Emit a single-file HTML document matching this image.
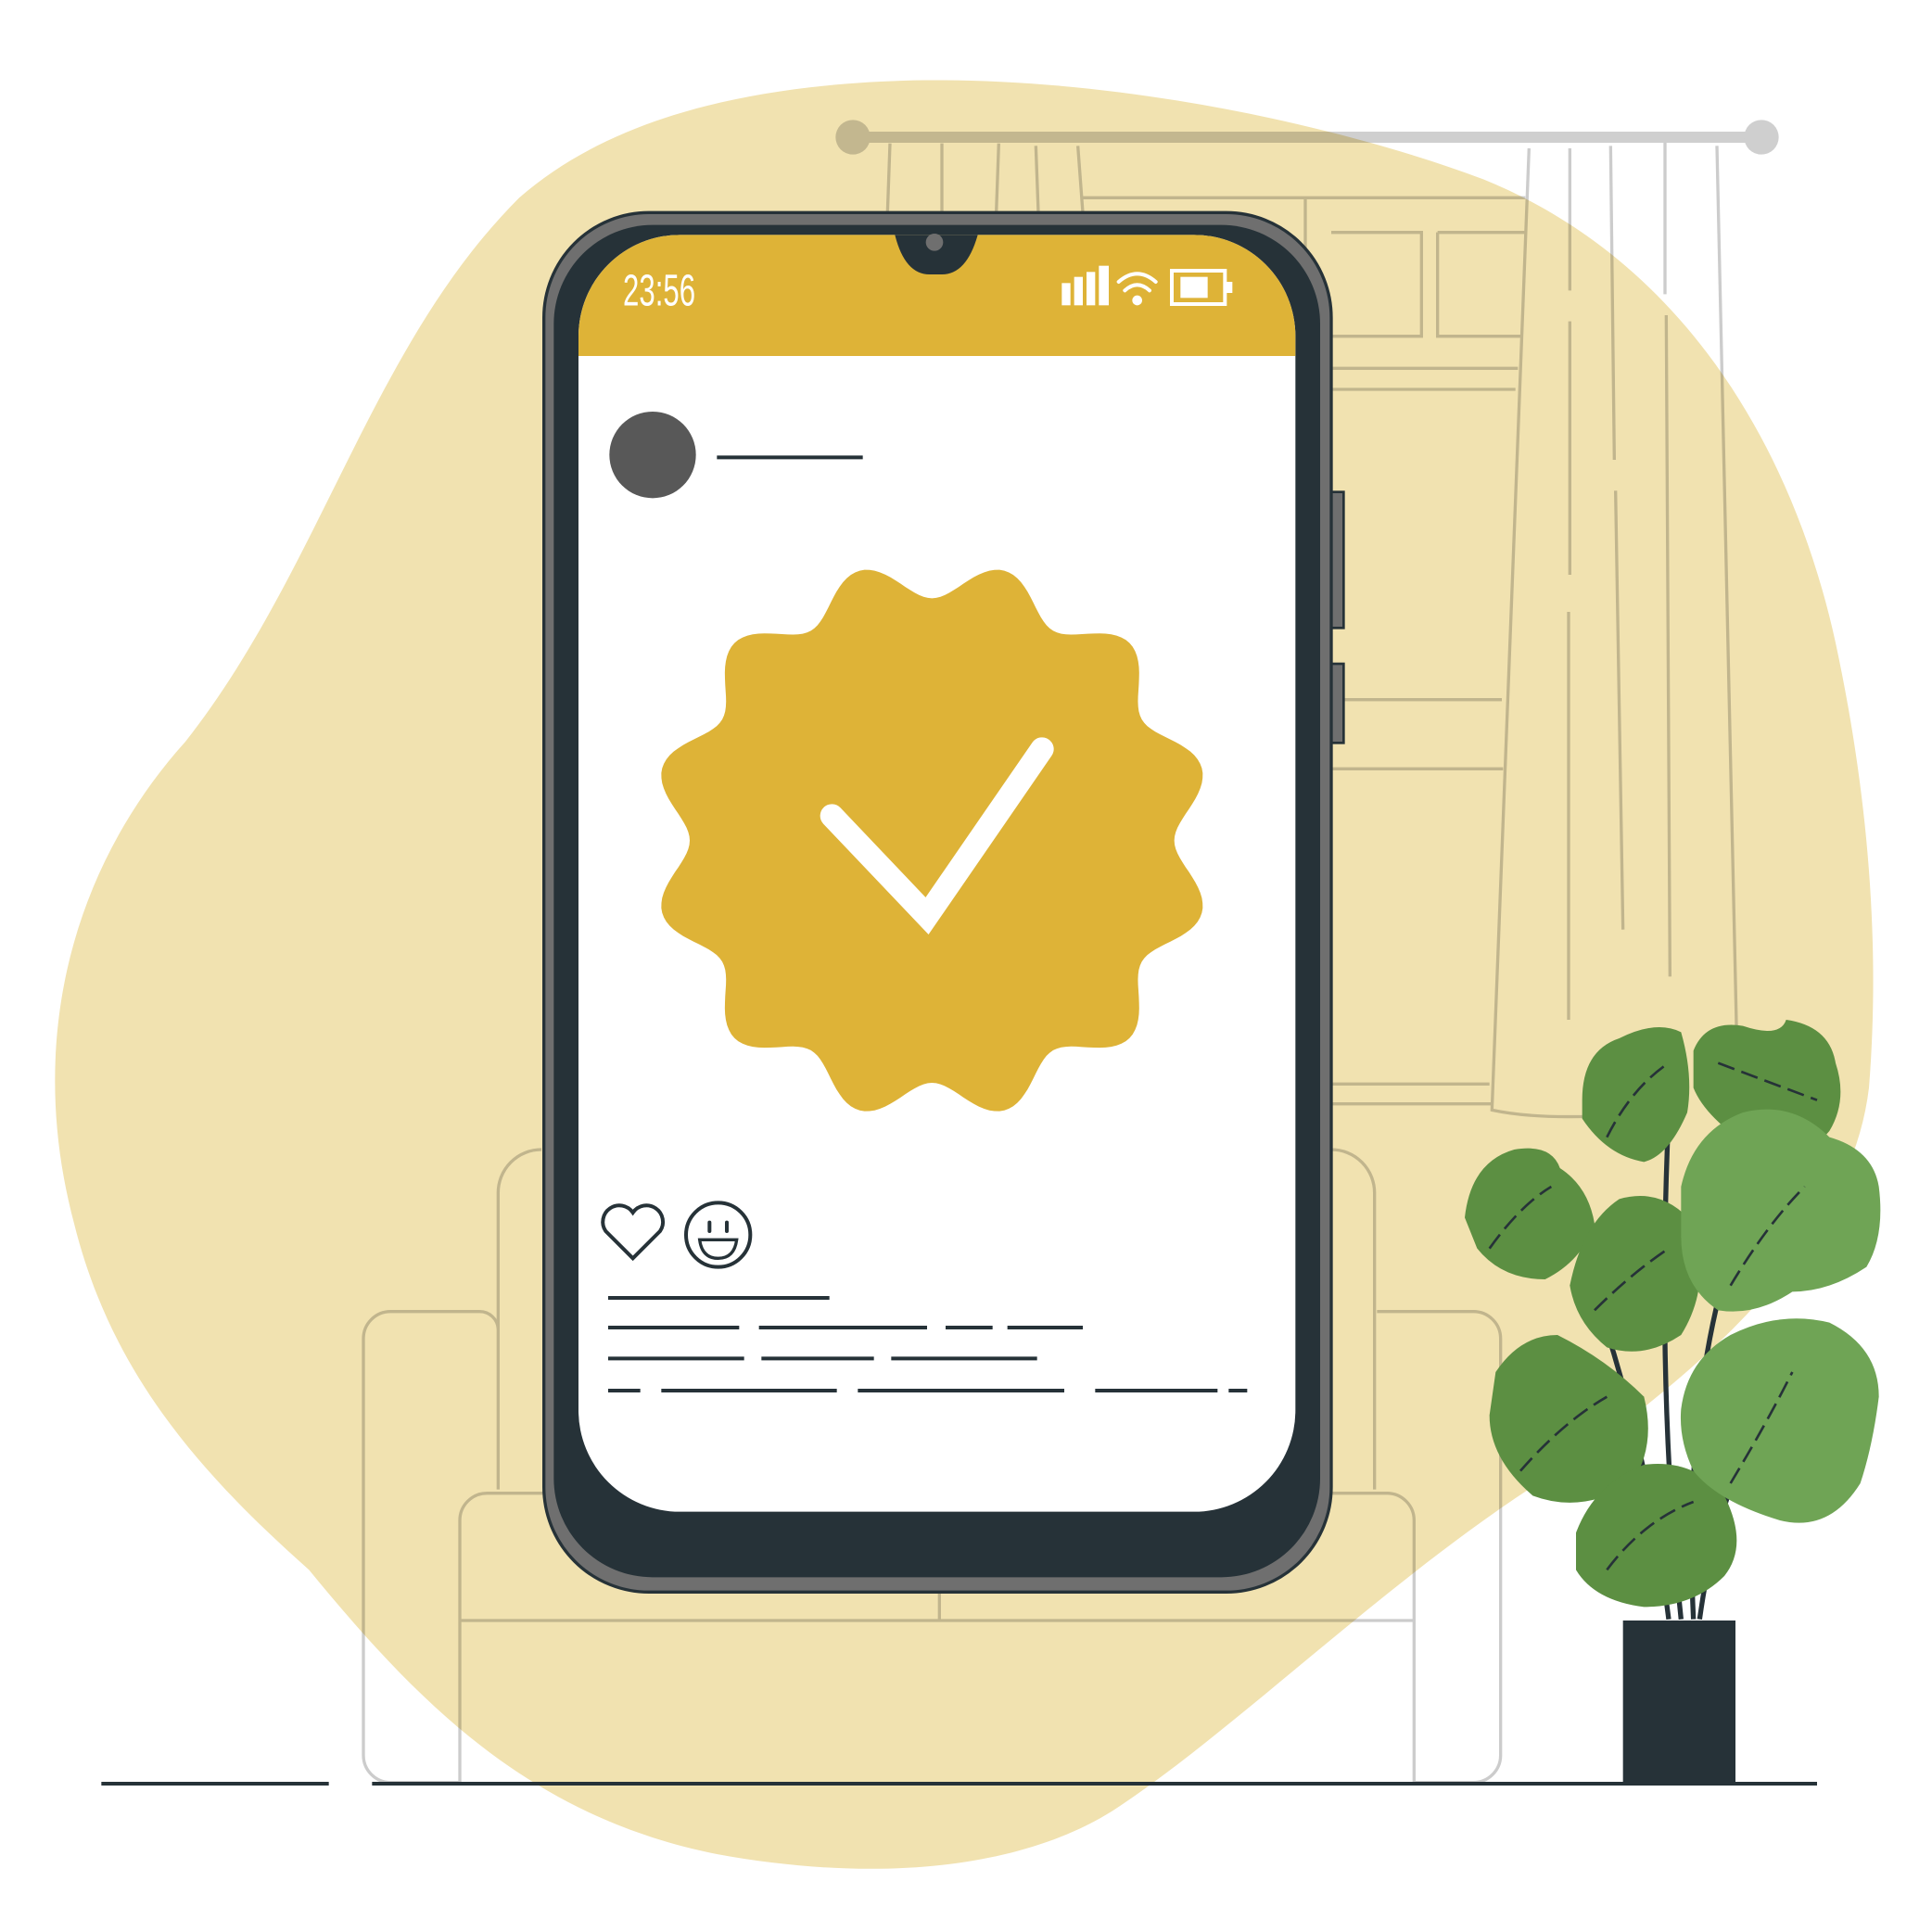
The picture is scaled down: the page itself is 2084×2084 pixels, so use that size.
<!DOCTYPE html>
<html><head><meta charset="utf-8"><style>html,body{margin:0;padding:0;background:#fff}svg{display:block}</style></head>
<body>
<svg width="2084" height="2084" viewBox="0 0 1563 1563" xmlns="http://www.w3.org/2000/svg">
<g fill="none" stroke="#cccccc" stroke-width="2.5">
<path d="M720 116 L718 172 M762 116 L762 172 M808 116 L806 172 M838 118 L840 172 M872 118 L876 172"/>
<path d="M876 160 H1234 M1056 160 V300 M1077 188 H1150 V272 H1077 M1163 188 H1234 M1163 188 V272 H1230 M1077 298 H1228 M1077 315 H1226 M1077 566 H1215 M1077 622 H1216 M1077 877 H1205 M1077 893 H1207"/>
<path d="M1077 930 a35 35 0 0 1 35 35 V1205 M438 930 a35 35 0 0 0 -35 35 V1205"/>
<path d="M372 1443 V1230 a22 22 0 0 1 22 -22 H1122 a22 22 0 0 1 22 22 V1443 M372 1311 H1144 M760 1288 V1311"/>
<path d="M403 1075 a15 15 0 0 0 -15 -14 H316 a22 22 0 0 0 -22 22 V1420 a22 22 0 0 0 22 22 H372 M1114 1061 H1192 a22 22 0 0 1 22 22 V1420 a22 22 0 0 1 -22 22 H1144"/>
<path d="M1237 120 L1207 898 Q1240 905 1290 903 M1270 120 V235 M1270 260 V465 M1269 495 V825 M1303 118 L1306 372 M1307 397 L1313 752 M1347 113 V238 M1348 255 L1351 790 M1389 118 L1405 840"/>
</g>
<line x1="690" y1="111" x2="1425" y2="111" stroke="#cfcfcf" stroke-width="9"/>
<circle cx="690" cy="111" r="14" fill="#cfcfcf"/><circle cx="1425" cy="111" r="14" fill="#cfcfcf"/>
<path style="mix-blend-mode:multiply" d="M740 65 C900 62 1080 100 1200 145 C1360 210 1450 360 1485 520 C1515 660 1520 780 1512 880 C1500 980 1420 1080 1260 1190 C1130 1270 1000 1400 900 1465 C820 1515 700 1522 580 1500 C430 1470 340 1380 250 1270 C160 1190 90 1110 60 990 C20 840 60 700 150 600 C260 460 300 280 420 160 C500 90 620 68 740 65 Z" fill="#F1E2B0"/>
<rect x="1070" y="398" width="17" height="110" fill="#6f6f6f" stroke="#263238" stroke-width="2"/>
<rect x="1070" y="537" width="17" height="64" fill="#6f6f6f" stroke="#263238" stroke-width="2"/>
<rect x="440" y="172" width="637" height="1116" rx="85" fill="#6f6f6f" stroke="#263238" stroke-width="2.5"/>
<rect x="448" y="182" width="620" height="1094" rx="80" fill="#263238"/>
<rect x="468" y="190" width="580" height="1033" rx="82" fill="#fff"/>
<path d="M468 288 V272 a82 82 0 0 1 82 -82 H966 a82 82 0 0 1 82 82 V288 Z" fill="#DEB337"/>
<path d="M724 190 H791 Q782 222 762 222 H752 Q732 222 724 190 Z" fill="#263238"/>
<circle cx="756" cy="196" r="7" fill="#6f6f6f"/>
<text x="504" y="247" font-family="Liberation Sans Narrow, Liberation Sans, sans-serif" font-size="36" fill="#fff" transform="translate(504 247) scale(0.65 1) translate(-504 -247)">23:56</text>
<g fill="#fff"><rect x="859" y="229" width="7" height="18"/><rect x="869" y="224" width="7" height="23"/><rect x="879" y="220" width="7" height="27"/><rect x="889" y="215" width="8" height="32"/></g>
<g fill="none" stroke="#fff" stroke-width="3" stroke-linecap="round"><path d="M905 228 Q920 215 935 228 M910 235 Q920 226 930 235"/></g>
<circle cx="920" cy="243" r="4" fill="#fff"/>
<rect x="948" y="219" width="43" height="27" fill="none" stroke="#fff" stroke-width="3"/><rect x="955" y="224" width="22" height="17" fill="#fff"/><rect x="992" y="228" width="5" height="9" fill="#fff"/>
<circle cx="528" cy="368" r="35" fill="#585858"/>
<line x1="580" y1="370" x2="698" y2="370" stroke="#263238" stroke-width="3"/>
<path id="badge" fill="#DEB337" d=""/>
<polyline points="673,660 750,741 843,606" fill="none" stroke="#fff" stroke-width="19" stroke-linecap="round"/>
<path d="M512 1018 L490 996 a12 12 0 0 1 22 -15 a12 12 0 0 1 22 15 Z" fill="none" stroke="#263238" stroke-width="3"/>
<circle cx="581" cy="999" r="26" fill="none" stroke="#263238" stroke-width="3"/>
<path d="M566 1003 H596 Q594 1018 581 1018 Q568 1018 566 1003 Z" fill="none" stroke="#263238" stroke-width="2.5"/>
<path d="M574 989 V996 M588 989 V996" stroke="#263238" stroke-width="3" stroke-linecap="round"/>
<g stroke="#263238" stroke-width="3"><path d="M492 1050 H671 M492 1074 H598 M614 1074 H750 M765 1074 H803 M815 1074 H876 M492 1099 H602 M616 1099 H707 M721 1099 H839 M492 1125 H518 M535 1125 H677 M694 1125 H861 M886 1125 H985 M994 1125 H1009"/></g>
<g stroke="#263238" stroke-width="4" fill="none"><path d="M1350 1310 Q1330 1150 1280 1020 M1360 1310 Q1340 1120 1350 900 M1370 1310 Q1360 1100 1420 960 M1375 1310 Q1390 1200 1440 1120"/></g>
<g fill="#5C8F42">
<path d="M1280 890 Q1280 850 1310 840 Q1340 825 1360 835 Q1370 870 1365 900 Q1350 935 1330 940 Q1300 935 1280 905 Z"/>
<path d="M1370 850 Q1380 825 1410 830 Q1440 840 1445 825 Q1480 830 1485 860 Q1495 890 1480 915 Q1460 940 1420 930 Q1380 905 1370 880 Z"/>
<path d="M1185 985 Q1190 940 1225 930 Q1255 925 1262 945 Q1285 960 1290 990 Q1280 1020 1250 1035 Q1215 1035 1195 1010 Z"/>
<path d="M1270 1040 Q1280 990 1310 970 Q1345 960 1370 990 Q1385 1040 1360 1080 Q1330 1100 1300 1090 Q1275 1070 1270 1040 Z"/>
<path d="M1210 1110 Q1230 1080 1260 1080 Q1300 1100 1330 1130 Q1340 1170 1320 1200 Q1280 1225 1240 1210 Q1205 1180 1205 1145 Z"/>
<path d="M1275 1240 Q1290 1200 1330 1185 Q1370 1180 1395 1210 Q1415 1250 1395 1275 Q1370 1300 1330 1300 Q1290 1295 1275 1270 Z"/>
</g>
<g fill="#6FA455">
<path d="M1360 960 Q1370 915 1410 900 Q1450 890 1480 920 Q1515 930 1520 960 Q1525 1000 1510 1025 Q1480 1045 1450 1045 Q1420 1065 1390 1060 Q1360 1040 1360 1000 Z"/>
<path d="M1360 1140 Q1365 1100 1400 1080 Q1440 1060 1480 1070 Q1520 1090 1520 1130 Q1515 1170 1505 1200 Q1480 1240 1440 1230 Q1390 1215 1370 1190 Q1358 1165 1360 1140 Z"/>
</g>
<g stroke="#263238" stroke-width="2" fill="none" stroke-dasharray="14 6">
<path d="M1300 920 Q1320 880 1350 860 M1390 860 Q1430 875 1470 890 M1205 1010 Q1230 975 1255 960 M1290 1060 Q1320 1030 1350 1010 M1230 1190 Q1265 1150 1300 1130 M1300 1270 Q1330 1230 1370 1215 M1400 1040 Q1430 990 1460 960 M1400 1200 Q1430 1150 1450 1110"/>
</g>
<rect x="1313" y="1311" width="91" height="132" fill="#263238"/>
<g stroke="#263238" stroke-width="3"><line x1="82" y1="1443" x2="266" y2="1443"/><line x1="301" y1="1443" x2="1470" y2="1443"/></g>
</svg>
<script>
var cx=754,cy=680,d="";
for(var i=0;i<=360;i++){var t=i*Math.PI/180;var r=211+15*Math.cos(12*(t-Math.PI/12));var x=cx+r*Math.sin(t),y=cy-r*Math.cos(t);d+=(i?"L":"M")+x.toFixed(1)+" "+y.toFixed(1);}
document.getElementById("badge").setAttribute("d",d+"Z");
</script>
</body></html>
